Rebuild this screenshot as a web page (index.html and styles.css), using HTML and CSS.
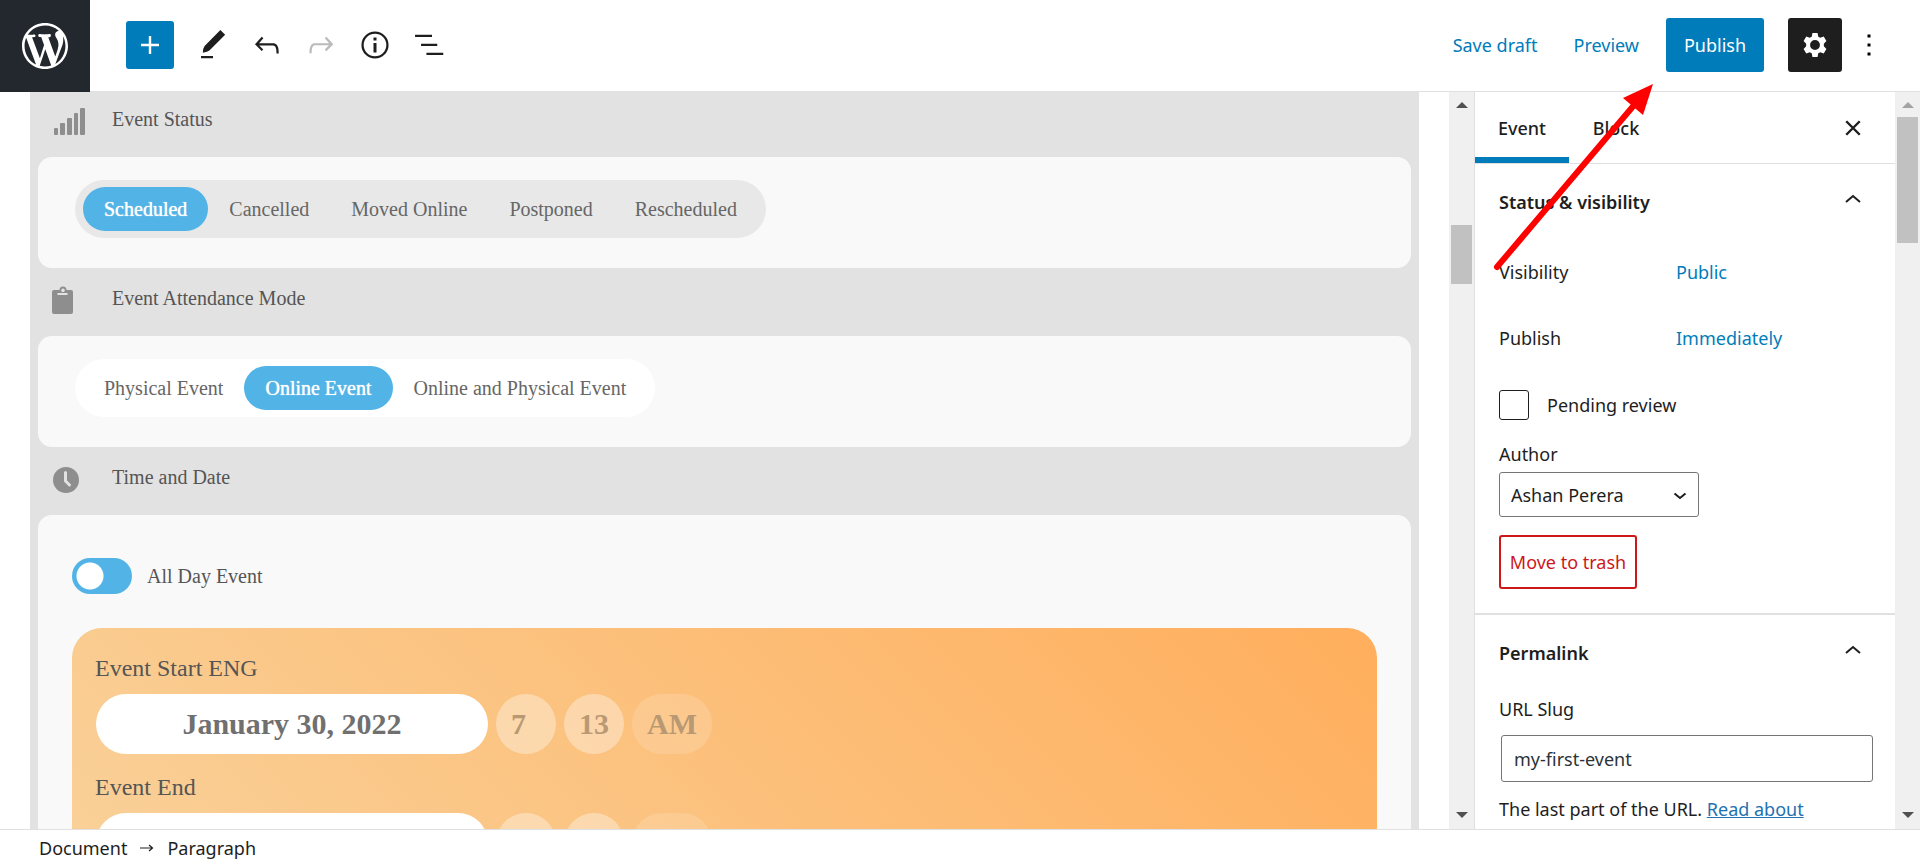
FILE: index.html
```
<!DOCTYPE html>
<html lang="en">
<head>
    <meta charset="utf-8">
    <title>Edit Event</title>
    <meta name="viewport" content="width=device-width, initial-scale=1.0">
    <link rel="stylesheet" href="styles.css">
</head>
<body>

    <header class="topbar">
        <a href="#" class="wp-logo" aria-label="View events">
            <svg viewBox="0 0 20 20"><path fill="#fff" d="M20 10c0-5.51-4.49-10-10-10C4.48 0 0 4.49 0 10c0 5.52 4.48 10 10 10 5.51 0 10-4.48 10-10zM7.78 15.37L4.37 6.22c.55-.02 1.17-.08 1.17-.08.5-.06.44-1.13-.06-1.11 0 0-1.45.11-2.37.11-.18 0-.37 0-.58-.01C4.12 2.69 6.87 1.11 10 1.11c2.33 0 4.45.87 6.05 2.34-.68-.11-1.65.39-1.65 1.58 0 .74.45 1.36.9 2.1.35.61.55 1.36.55 2.46 0 1.49-1.4 5-1.4 5l-3.03-8.37c.54-.02.82-.17.82-.17.5-.05.44-1.25-.06-1.22 0 0-1.44.12-2.38.12-.87 0-2.33-.12-2.33-.12-.5-.03-.56 1.2-.06 1.22l.92.08 1.26 3.41zM17.41 10c.24-.64.74-1.87.43-4.25.7 1.29 1.05 2.71 1.05 4.25 0 3.29-1.73 6.24-4.4 7.78.97-2.59 1.94-5.2 2.92-7.78zM6.1 18.09C3.12 16.65 1.11 13.53 1.11 10c0-1.3.23-2.48.72-3.59C3.25 10.3 4.67 14.2 6.1 18.09zm4.03-6.63l2.58 6.98c-.86.29-1.76.45-2.71.45-.79 0-1.57-.11-2.29-.33.81-2.38 1.62-4.74 2.42-7.1z"/></svg>
        </a>
        <div class="tools">
            <button type="button" class="tool inserter" aria-label="Add block">
                <svg viewBox="0 0 24 24"><path d="M18 11.2h-5.2V6h-1.6v5.2H6v1.6h5.2V18h1.6v-5.2H18z"/></svg>
            </button>
            <button type="button" class="tool" aria-label="Tools">
                <svg viewBox="0 0 24 24"><path d="M16.9 2l3.200 3.100L9.600 15.600Q8.500 16.600 5.200 17.200 5.300 14 6.400 12.600zM4 19.300h8v1.500H4z"/></svg>
            </button>
            <button type="button" class="tool" aria-label="Undo">
                <svg viewBox="0 0 24 24"><path d="M18.300 11.700c-.6-.6-1.400-.9-2.300-.9H6.700l2.900-3.300-1.100-1-4.500 5L8.500 16l1-1-2.700-2.700H16c.5 0 .9.200 1.300.5 1 1 1 3.400 1 4.500v.3h1.500v-.2c0-1.500 0-4.300-1.500-5.700z"/></svg>
            </button>
            <button type="button" class="tool" aria-label="Redo" disabled>
                <svg viewBox="0 0 24 24"><path d="M15.600 6.500l-1.100 1 2.900 3.300H8c-.9 0-1.700.3-2.300.9-1.400 1.500-1.400 4.200-1.400 5.600v.2h1.500v-.3c0-1.100 0-3.500 1-4.500.3-.3.7-.5 1.300-.5h9.200L14.500 15l1.100 1.100 4.600-4.600-4.600-5z"/></svg>
            </button>
            <button type="button" class="tool" aria-label="Details">
                <svg viewBox="0 0 24 24"><circle cx="12" cy="12" r="8.300" fill="none" stroke="#1e1e1e" stroke-width="1.500"/><path d="M11 7h2v2h-2zM11 10.700h2V17h-2z"/></svg>
            </button>
            <button type="button" class="tool" aria-label="List view">
                <svg viewBox="0 0 24 24"><path d="M2.700 5.200H14v1.500H2.700zM6.700 11.200H17.500v1.500H6.700zM10.300 17.200H21.500v1.500H10.300z"/></svg>
            </button>
        </div>
        <div class="actions">
            <button type="button" class="text-button">Save draft</button>
            <button type="button" class="text-button">Preview</button>
            <button type="button" class="publish">Publish</button>
            <button type="button" class="settings" aria-label="Settings">
                <svg viewBox="0 0 24 24"><path fill="#fff" fill-rule="evenodd" d="M10.300 4h3.400l.5 2.500 1.300.7 2.300-.8 1.800 2.900-1.700 1.800v1.800l1.700 1.800-1.800 2.900-2.300-.8-1.300.7-.5 2.500h-3.400l-.5-2.500-1.300-.7-2.300.8-1.800-2.900 1.700-1.800v-1.800L4.400 9.300l1.800-2.900 2.300.8 1.300-.7zM12 8.700a3.300 3.300 0 1 0 0 6.600 3.300 3.300 0 0 0 0-6.600z"/></svg>
            </button>
            <button type="button" class="more" aria-label="Options">
                <svg viewBox="0 0 24 24"><path d="M11 5h2v2h-2zM11 11h2v2h-2zM11 17h2v2h-2z"/></svg>
            </button>
        </div>
    </header>

    <div class="workspace">
        <main class="editor">
            <div class="event-form">
                <h2 class="section-title">
                    <svg width="36" height="32" viewBox="0 0 36 32"><g fill="#8e8e8e"><rect x="2" y="21" width="4" height="7" rx="1"/><rect x="8" y="16" width="5" height="12" rx="1"/><rect x="15" y="11" width="5" height="17" rx="1"/><rect x="22" y="6" width="4" height="22" rx="1"/><rect x="28" y="1" width="5" height="27" rx="1"/></g></svg>
                    Event Status
                </h2>
                <section class="card">
                    <div class="segment gray">
                        <button type="button" class="active">Scheduled</button>
                        <button type="button">Cancelled</button>
                        <button type="button">Moved Online</button>
                        <button type="button">Postponed</button>
                        <button type="button">Rescheduled</button>
                    </div>
                </section>

                <h2 class="section-title">
                    <svg width="36" height="32" viewBox="0 0 36 32"><path fill="#8e8e8e" fill-rule="evenodd" d="M2 4h5.500a3.500 3.500 0 0 1 7 0H19q2 0 2 2v20q0 2-2 2H2q-2 0-2-2V6q0-2 2-2zM11 2.500a1.800 1.800 0 1 0 .01 0zM5.500 7v2h10V7z"/></svg>
                    Event Attendance Mode
                </h2>
                <section class="card">
                    <div class="segment">
                        <button type="button">Physical Event</button>
                        <button type="button" class="active">Online Event</button>
                        <button type="button">Online and Physical Event</button>
                    </div>
                </section>

                <h2 class="section-title">
                    <svg width="36" height="32" viewBox="0 0 36 32"><circle cx="14" cy="15" r="13" fill="#8e8e8e"/><path d="M13.500 7.500V16l4 4" fill="none" stroke="#e2e2e2" stroke-width="3" stroke-linecap="round"/></svg>
                    Time and Date
                </h2>
                <section class="card dates">
                    <label class="toggle"><input type="checkbox">All Day Event</label>
                    <div class="schedule">
                        <h3>Event Start ENG</h3>
                        <div class="date-row">
                            <input type="text" class="date" value="January 30, 2022" aria-label="Start date">
                            <input type="text" class="time" value="7" aria-label="Start hour">
                            <input type="text" class="time" value="13" aria-label="Start minute">
                            <button type="button" class="ampm">AM</button>
                        </div>
                        <h3>Event End</h3>
                        <div class="date-row">
                            <input type="text" class="date" aria-label="End date">
                            <input type="text" class="time" aria-label="End hour">
                            <input type="text" class="time" aria-label="End minute">
                            <button type="button" class="ampm" aria-label="AM or PM"></button>
                        </div>
                    </div>
                </section>
            </div>
        </main>
        <div class="scrollbar editor-scroll"><div class="thumb"></div></div>

        <aside class="sidebar">
            <div class="tabs">
                <button type="button" class="tab current">Event</button>
                <button type="button" class="tab">Block</button>
                <button type="button" class="close" aria-label="Close settings">
                    <svg viewBox="0 0 24 24" width="36" height="36"><path d="M7.500 7.500l9 9M16.500 7.500l-9 9" fill="none" stroke="#1e1e1e" stroke-width="1.600"/></svg>
                </button>
            </div>

            <section class="panel status">
                <h2><button type="button" class="panel-toggle">Status &amp; visibility
                    <svg viewBox="0 0 16 9" width="16" height="9"><path d="M1 8l7-6 7 6" fill="none" stroke="#1e1e1e" stroke-width="2"/></svg></button></h2>
                <div class="row"><span>Visibility</span><button type="button" class="text-button">Public</button></div>
                <div class="row"><span>Publish</span><button type="button" class="text-button">Immediately</button></div>
                <label class="pending"><input type="checkbox">Pending review</label>
                <label class="author-label" for="author">Author</label>
                <div class="select-wrap">
                    <select id="author"><option>Ashan Perera</option></select>
                    <svg viewBox="0 0 14 8" width="14" height="8"><path d="M1.500 1.500L7 6l5.500-4.500" fill="none" stroke="#1e1e1e" stroke-width="2"/></svg>
                </div>
                <button type="button" class="trash">Move to trash</button>
            </section>

            <section class="panel permalink">
                <h2><button type="button" class="panel-toggle">Permalink
                    <svg viewBox="0 0 16 9" width="16" height="9"><path d="M1 8l7-6 7 6" fill="none" stroke="#1e1e1e" stroke-width="2"/></svg></button></h2>
                <label for="slug">URL Slug</label>
                <input type="text" id="slug" value="my-first-event">
                <p>The last part of the URL. <a href="#">Read about</a></p>
            </section>
        </aside>
        <div class="scrollbar page-scroll"><div class="thumb"></div></div>
    </div>

    <footer class="breadcrumb">
        <span>Document</span>
        <svg width="14" height="10" viewBox="0 0 14 10"><path d="M0 5h12M9 2l3.500 3L9 8" fill="none" stroke="#1e1e1e" stroke-width="1.200"/></svg>
        <span>Paragraph</span>
    </footer>

    <!-- pointer to the publish button -->
    <svg class="pointer" width="170" height="200" viewBox="0 0 170 200">
        <path d="M10 187L148 24" stroke="#f00" stroke-width="6" stroke-linecap="round"/>
        <path d="M166 4L136 18 156 35z" fill="#f00"/>
    </svg>

</body>
</html>
```
FILE: styles.css
```
* {
    box-sizing: border-box;
}

body {
    margin: 0;
    height: 100vh;
    display: flex;
    flex-direction: column;
    overflow: hidden;
    position: relative;
    background: #fff;
    color: #1e1e1e;
    font-family: "Segoe UI", "Noto Sans", sans-serif;
    font-size: 18px;
    line-height: 28px;
}

button, input, select {
    font: inherit;
    color: inherit;
    margin: 0;
}

button {
    border: none;
    background: none;
    padding: 0;
    cursor: pointer;
}

svg {
    display: block;
    flex: none;
}

h2, h3, p {
    margin: 0;
    font-size: inherit;
    font-weight: normal;
}

/* top bar */
.topbar {
    flex: none;
    display: flex;
    height: 92px;
    border-bottom: 1px solid #e0e0e0;
}

.wp-logo {
    width: 90px;
    height: 92px;
    display: flex;
    align-items: center;
    justify-content: center;
    background: #23282e;
}

.wp-logo svg {
    width: 46px;
    height: 46px;
}

.tools {
    display: flex;
    align-items: center;
    gap: 6px;
    padding-left: 36px;
    height: 90px;
}

.tool {
    width: 48px;
    height: 48px;
    display: flex;
    align-items: center;
    justify-content: center;
    fill: #1e1e1e;
}

.tool svg, .settings svg, .more svg {
    width: 36px;
    height: 36px;
}

.inserter {
    background: #007cba;
    border-radius: 3px;
    fill: #fff;
    margin-right: 9px;
}

.tool:disabled {
    fill: #bbb;
}

.actions {
    display: flex;
    align-items: center;
    margin-left: auto;
    height: 90px;
    padding-right: 33px;
}

.text-button {
    color: #007cba;
}

.actions .text-button {
    margin-right: 36px;
}

.actions .text-button + .text-button {
    margin-right: 27px;
}

.publish {
    width: 98px;
    height: 54px;
    border-radius: 3px;
    background: #007cba;
    color: #fff;
}

.settings {
    width: 54px;
    height: 54px;
    margin: 0 9px 0 24px;
    border-radius: 3px;
    background: #1e1e1e;
    display: flex;
    align-items: center;
    justify-content: center;
}

/* editor */
.workspace {
    flex: 1;
    min-height: 0;
    display: flex;
}

.editor {
    flex: 1;
    min-width: 0;
    padding: 0 30px;
    overflow: hidden;
}

.event-form {
    margin-top: -3px;
    padding: 0 8px;
    background: #e2e2e2;
    font-family: "Liberation Serif", serif;
    color: #555;
}

.section-title {
    display: flex;
    align-items: center;
    gap: 24px;
    height: 68px;
    padding: 0 0 8px 14px;
    font-size: 20px;
}

.section-title svg {
    margin-top: 8px;
}

.card {
    height: 111px;
    padding: 23px 37px;
    background: #f9f9f9;
    border-radius: 14px;
}

.segment {
    display: inline-flex;
    padding: 7px 8px;
    border-radius: 29px;
    background: #fff;
}

.segment.gray {
    background: #e8e8e8;
}

.segment button {
    height: 44px;
    padding: 0 21px;
    border-radius: 22px;
    font-size: 20px;
    color: #666;
}

.segment .active {
    background: #52b3e6;
    color: #fff;
    text-shadow: 0 0 1px #fff;
}

.dates {
    height: auto;
    padding: 43px 34px;
}

.toggle {
    display: flex;
    align-items: center;
    gap: 15px;
    font-size: 20px;
}

.toggle input {
    appearance: none;
    width: 60px;
    height: 36px;
    border-radius: 18px;
    background: radial-gradient(circle at 18px 18px, #fff 13px, #52b3e6 14px);
}

.schedule {
    margin-top: 34px;
    padding: 23px;
    border-radius: 30px;
    background: linear-gradient(45deg, #f9d29b, #ffae5c);
}

.schedule h3 {
    font-size: 24px;
    line-height: 34px;
    margin-bottom: 9px;
}

.date-row {
    display: flex;
    gap: 8px;
    padding-left: 1px;
    margin-bottom: 16px;
}

.date-row input, .ampm {
    height: 60px;
    border: none;
    border-radius: 30px;
    font-size: 30px;
    font-weight: bold;
}

.date {
    width: 392px;
    text-align: center;
    background: #fff;
    color: #707070;
}

.date-row .time {
    width: 60px;
    padding: 0 15px;
    background: rgba(255, 255, 255, .35);
    color: #b99973;
}

.ampm {
    width: 80px;
    background: rgba(255, 255, 255, .15);
    color: #b99973;
}

/* scrollbars */
.scrollbar {
    flex: none;
    width: 25px;
    padding: 0 2px;
    background: #f0f0f0;
    display: flex;
    flex-direction: column;
}

.scrollbar::before, .scrollbar::after {
    content: "";
    align-self: center;
    border: 6px solid transparent;
}

.scrollbar::before {
    border-top: none;
    border-bottom-color: #505050;
    margin-top: 10px;
}

.scrollbar::after {
    border-bottom: none;
    border-top-color: #505050;
    margin: auto 0 11px;
}

.page-scroll::before {
    border-bottom-color: #a3a3a3;
}

.thumb {
    background: #c1c1c1;
}

.editor-scroll .thumb {
    height: 59px;
    margin-top: 117px;
}

.page-scroll .thumb {
    height: 126px;
    margin-top: 9px;
}

/* sidebar */
.sidebar {
    flex: none;
    width: 421px;
    border-left: 1px solid #e0e0e0;
    overflow: hidden;
}

.tabs {
    display: flex;
    height: 72px;
    border-bottom: 1px solid #e0e0e0;
}

.tab {
    width: 94px;
    padding-top: 6px;
    border-bottom: 6px solid transparent;
    font-weight: 500;
}

.tab.current {
    border-bottom-color: #007cba;
}

.close {
    margin: 0 24px 0 auto;
}

.panel {
    padding: 0 24px;
    border-bottom: 2px solid #e0e0e0;
}

.panel-toggle {
    width: 100%;
    height: 75px;
    display: flex;
    align-items: center;
    justify-content: space-between;
    font-weight: 600;
}

.panel-toggle svg {
    margin: 0 10px 6px 0;
}

.row {
    display: flex;
    align-items: center;
    height: 66px;
}

.row span {
    width: 177px;
}

.status .pending {
    display: flex;
    align-items: center;
    gap: 18px;
    margin-top: 19px;
    height: 30px;
}

.pending input {
    appearance: none;
    width: 30px;
    height: 30px;
    border: 1px solid #1e1e1e;
    border-radius: 3px;
}

.author-label {
    display: block;
    margin: 20px 0 4px;
}

.select-wrap {
    position: relative;
    width: 200px;
}

.select-wrap select {
    appearance: none;
    width: 100%;
    height: 45px;
    padding: 0 11px;
    border: 1px solid #757575;
    border-radius: 3px;
    background: #fff;
}

.select-wrap svg {
    position: absolute;
    right: 12px;
    top: 20px;
}

.trash {
    height: 54px;
    width: 138px;
    margin: 18px 0 24px;
    border: 2px solid #cc1818;
    border-radius: 3px;
    color: #cc1818;
}

.permalink {
    padding-bottom: 24px;
}

.permalink label {
    display: block;
    margin: 5px 0 12px;
}

.permalink input {
    display: block;
    width: 372px;
    height: 47px;
    margin-left: 2px;
    padding: 0 12px;
    border: 1px solid #757575;
    border-radius: 3px;
    color: #2c3338;
}

.permalink p {
    margin-top: 13px;
}

.permalink a {
    color: #2271b1;
}

/* footer */
.breadcrumb {
    flex: none;
    display: flex;
    align-items: center;
    gap: 13px;
    height: 36px;
    padding-left: 39px;
    border-top: 1px solid #e0e0e0;
}

.pointer {
    position: absolute;
    left: 1487px;
    top: 80px;
    pointer-events: none;
}
```
